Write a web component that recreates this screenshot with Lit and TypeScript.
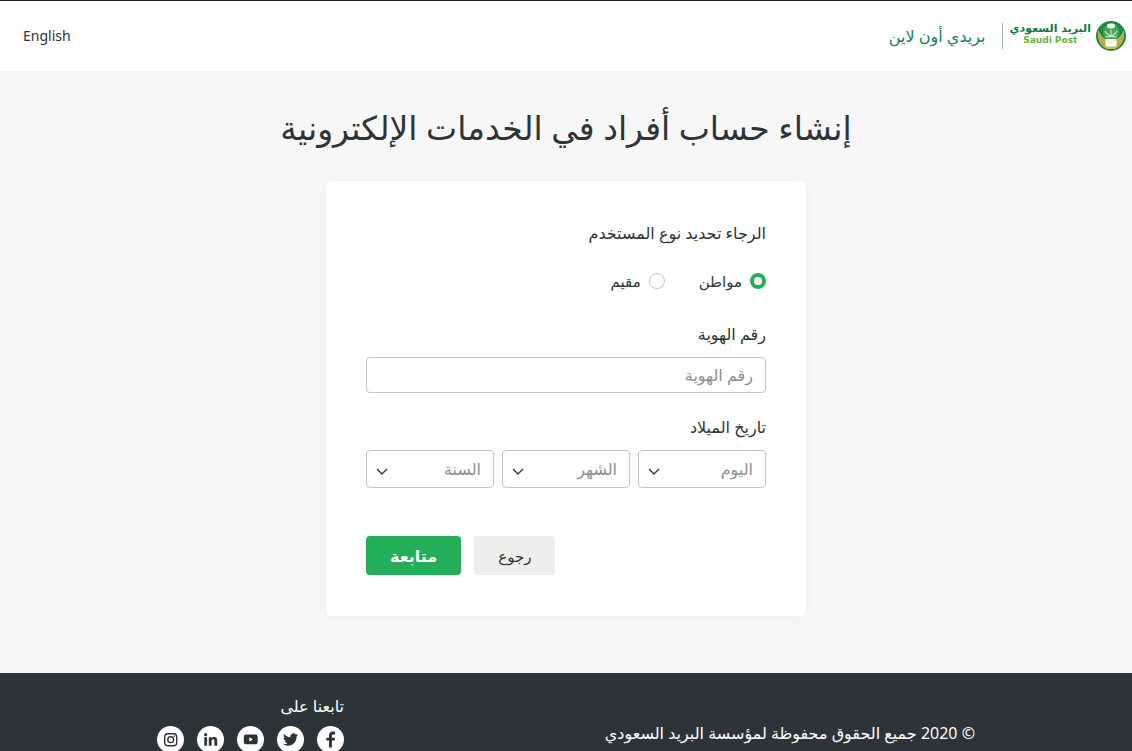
import { LitElement, html, css, svg } from "lit";
import { customElement, state } from "lit/decorators.js";

const socials = [
  {
    name: "Facebook",
    art: svg`<path d="M14.9 21.5v-7h2.8l.4-2.800h-3.200V9.900c0-.9.4-1.400 1.500-1.400h1.700V5.800c-.5-.1-1.200-.2-2.200-.2-2.400 0-3.900 1.400-3.900 3.900v2.200H9.300v2.800H12v7z"/>`,
  },
  {
    name: "Twitter",
    art: svg`<path transform="translate(6 6) scale(.63)" d="M23.95 4.57a10 10 0 0 1-2.82.77 4.96 4.96 0 0 0 2.16-2.72c-.95.55-2 .95-3.13 1.18a4.92 4.92 0 0 0-8.38 4.48C7.69 8.09 4.07 6.13 1.64 3.16a4.82 4.82 0 0 0-.67 2.48c0 1.71.87 3.21 2.19 4.1a4.9 4.9 0 0 1-2.23-.62v.06a4.92 4.92 0 0 0 3.95 4.83 5 5 0 0 1-2.21.08 4.94 4.94 0 0 0 4.6 3.42A9.87 9.87 0 0 1 0 19.54a13.99 13.99 0 0 0 7.55 2.21c9.05 0 14-7.5 14-13.98 0-.21 0-.42-.02-.63a9.94 9.94 0 0 0 2.46-2.55z"/>`,
  },
  {
    name: "YouTube",
    art: svg`<path fill-rule="evenodd" d="M9 8.500h9.500a2.200 2.200 0 0 1 2.200 2.200v5.400a2.200 2.200 0 0 1-2.200 2.200H9a2.200 2.200 0 0 1-2.200-2.200v-5.400A2.200 2.200 0 0 1 9 8.500zm3.300 2.800v4.200l3.800-2.100z"/>`,
  },
  {
    name: "LinkedIn",
    art: svg`<circle cx="8.700" cy="8.700" r="1.600"/><path d="M7.300 11.200h2.800v8.600H7.300zM11.800 11.200h2.700v1.200c.5-.9 1.400-1.400 2.600-1.400 2.400 0 3.100 1.500 3.100 3.800v5h-2.800v-4.500c0-1.200-.2-2-1.300-2s-1.500.8-1.500 2v4.500h-2.800z"/>`,
  },
  {
    name: "Instagram",
    art: svg`<rect x="7.700" y="7.700" width="12" height="12" rx="3.200" fill="none" stroke="currentColor" stroke-width="1.400"/><circle cx="13.700" cy="13.700" r="2.900" fill="none" stroke="currentColor" stroke-width="1.400"/><circle cx="17.200" cy="10.200" r=".8"/>`,
  },
];

const range = (from: number, to: number) =>
  Array.from({ length: Math.abs(to - from) + 1 }, (_, i) => (from < to ? from + i : from - i));

const dateParts = [
  { id: "day", label: "اليوم", values: range(1, 31) },
  { id: "month", label: "الشهر", values: range(1, 12) },
  { id: "year", label: "السنة", values: range(2020, 1920) },
];

@customElement("app-root")
export class AppRoot extends LitElement {
  @state() private userType = "citizen";

  static styles = css`
    :host {
      display: flex;
      flex-direction: column;
      height: 100vh;
      overflow-y: auto;
      scrollbar-width: none;
      box-sizing: border-box;
      border-top: 1px solid #1b1b1f;
      background: #f7f7f7;
      color: #2e3436;
      font: 16px/24px "Noto Sans", "DejaVu Sans", sans-serif;
    }
    * { box-sizing: border-box; }
    a { color: inherit; text-decoration: none; }
    .header {
      display: flex;
      flex: none;
      align-items: center;
      justify-content: space-between;
      height: 70px;
      padding-inline: 6px 23px;
      background: #fff;
      box-shadow: 0 1px 4px rgba(0, 0, 0, 0.04);
      direction: rtl;
    }
    .brand { display: flex; align-items: center; }
    .emblem { width: 30px; height: 30px; display: block; }
    .wordmark {
      display: flex;
      flex-direction: column;
      align-items: center;
      margin-inline: 5px 7px;
      padding-bottom: 5px;
      color: #0c7b3e;
      font: bold 11px/12px "DejaVu Sans", sans-serif;
    }
    .latin { color: #62b146; font-size: 9px; line-height: 10px; }
    .service {
      padding-inline-start: 16px;
      border-inline-start: 1px solid #9fbdb0;
      color: #15805f;
      line-height: 26px;
    }
    .language { font-size: 14px; }
    .main {
      flex: none;
      display: flex;
      flex-direction: column;
      align-items: center;
      padding: 33px 16px 57px;
    }
    .title {
      margin: 0 0 29px;
      font-size: 33px;
      line-height: 48px;
      font-weight: normal;
      text-align: center;
    }
    .card {
      width: 100%;
      max-width: 480px;
      padding: 40px 40px 41px;
      border-radius: 5px;
      background: #fff;
      box-shadow: 0 2px 12px rgba(0, 0, 0, 0.03);
    }
    .group { margin: 0 0 22px; padding: 0; border: 0; min-width: 0; }
    .label { display: block; padding: 0; margin-bottom: 11px; }
    .kinds { display: flex; gap: 34px; padding: 13px 0 7px; }
    .kind { display: flex; align-items: center; gap: 8px; font-size: 15px; }
    .radio {
      appearance: none;
      width: 16px;
      height: 16px;
      margin: 0;
      border: 1px solid #bfc7c4;
      border-radius: 50%;
      background: #fff;
    }
    .radio:checked { border: 4px solid #25ae58; }
    .field {
      display: block;
      width: 100%;
      height: 36px;
      padding: 0 12px;
      border: 1px solid #c4c4c4;
      border-radius: 4px;
      background: #fff;
      color: #8b8f8d;
      font: inherit;
    }
    .field::placeholder { color: #8b8f8d; opacity: 1; }
    .dates { display: grid; grid-template-columns: repeat(3, 1fr); gap: 8px; }
    .select {
      appearance: none;
      height: 38px;
      background: #fff
        url("data:image/svg+xml,%3Csvg xmlns='http://www.w3.org/2000/svg' width='12' height='8'%3E%3Cpath d='M1 1l5 5 5-5' fill='none' stroke='%23333' stroke-width='1.4'/%3E%3C/svg%3E")
        no-repeat left 9px top 17px;
    }
    .actions { display: flex; justify-content: flex-end; gap: 13px; margin-top: 48px; }
    .button {
      height: 39px;
      padding: 0 24px;
      border: 0;
      border-radius: 4px;
      background: #eeeeec;
      color: #2e3436;
      font: inherit;
      font-size: 15px;
    }
    .primary { background: #25ae58; color: #fff; font-size: 16px; font-weight: bold; }
    .footer {
      flex: 1 0 auto;
      padding: 21px 16px 24px;
      background: #2d3437;
      color: #fff;
    }
    .inner {
      display: flex;
      justify-content: space-between;
      align-items: flex-end;
      max-width: 818px;
      margin: 0 auto;
    }
    .copyright { margin: 0; padding-bottom: 8px; }
    .follow { margin: 0 0 8px; }
    .socials { display: flex; gap: 13px; }
    .social { width: 27px; height: 27px; border-radius: 50%; background: #fff; color: #2d3437; }
    .glyph { display: block; width: 27px; height: 27px; fill: currentColor; }
  `;

  render() {
    return html`
      <header class="header" lang="ar">
        <div class="brand">
          <svg class="emblem" viewBox="0 0 30 30" role="img" aria-label="البريد السعودي">
            <circle cx="15" cy="15" r="15" fill="#1b8a48" />
            <path d="M2.500 9C.5 16 3 25 11 28h8c8-3 10.500-12 8.500-19-1 4-3 7-7 9.500h-11C5.500 16 3.500 13 2.500 9z" fill="#d6b653" />
            <path d="M2 13c2 4 4 6 8 8M2.500 17.500c2 3 4 5 7.500 6M4.500 22c2 2 4 3 6 3.500M28 13c-2 4-4 6-8 8M27.500 17.500c-2 3-4 5-7.500 6M25.500 22c-2 2-4 3-6 3.500" fill="none" stroke="#7f9a3c" stroke-width=".9" />
            <circle cx="15" cy="11" r="8.200" fill="#45a554" />
            <path d="M11 3.500c1-1.500 7-1.500 8 0l-.5 3-3.500 1.500-3.500-1.500z" fill="#fff" />
            <path d="M9 10c2 4 7 6 12 6M21 10c-2 4-7 6-12 6M15 9v5" fill="none" stroke="#cfe6cb" stroke-width="1.200" />
            <path d="M9.500 18h11v7.500h-11z" fill="#fffdf6" />
            <path d="M9.500 18l5.500 4 5.500-4" fill="none" stroke="#dccf9c" stroke-width=".8" />
          </svg>
          <div class="wordmark"><span>البريد السعودي</span><span class="latin" dir="ltr">Saudi Post</span></div>
          <a class="service" href="#">بريدي أون لاين</a>
        </div>
        <a class="language" href="#" lang="en">English</a>
      </header>
      <main class="main" dir="rtl" lang="ar">
        <h1 class="title">إنشاء حساب أفراد في الخدمات الإلكترونية</h1>
        <form class="card" @submit=${(e: Event) => e.preventDefault()}>
          <fieldset class="group">
            <legend class="label">الرجاء تحديد نوع المستخدم</legend>
            <div class="kinds">
              ${[["citizen", "مواطن"], ["resident", "مقيم"]].map(
                ([value, text]) => html`<label class="kind">
                  <input class="radio" type="radio" name="kind" .value=${value}
                    .checked=${this.userType === value}
                    @change=${() => (this.userType = value)} />
                  <span>${text}</span>
                </label>`
              )}
            </div>
          </fieldset>
          <div class="group">
            <label class="label" for="identity">رقم الهوية</label>
            <input class="field" id="identity" type="text" inputmode="numeric" placeholder="رقم الهوية" />
          </div>
          <fieldset class="group">
            <legend class="label">تاريخ الميلاد</legend>
            <div class="dates">
              ${dateParts.map(
                (part) => html`<select class="field select" id=${part.id} aria-label=${part.label}>
                  <option value="">${part.label}</option>
                  ${part.values.map((v) => html`<option value=${v}>${v}</option>`)}
                </select>`
              )}
            </div>
          </fieldset>
          <div class="actions">
            <button class="button" type="button">رجوع</button>
            <button class="button primary" type="submit">متابعة</button>
          </div>
        </form>
      </main>
      <footer class="footer" dir="rtl" lang="ar">
        <div class="inner">
          <p class="copyright">© 2020 جميع الحقوق محفوظة لمؤسسة البريد السعودي</p>
          <div>
            <p class="follow">تابعنا على</p>
            <nav class="socials">
              ${socials.map(
                (s) => html`<a class="social" href="#" aria-label=${s.name}>
                  <svg class="glyph" viewBox="0 0 27 27">${s.art}</svg>
                </a>`
              )}
            </nav>
          </div>
        </div>
      </footer>
    `;
  }
}
